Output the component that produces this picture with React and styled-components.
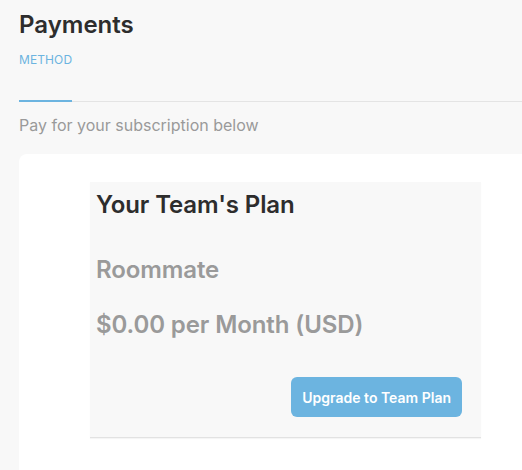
import React from "react";
import styled, { createGlobalStyle } from "styled-components";

const Global = createGlobalStyle`
  html, body { margin: 0; padding: 0; overflow: hidden; background: #f8f8f8; }
  body { font-family: Inter, "Noto Sans", sans-serif; -webkit-font-smoothing: antialiased; }
  * { box-sizing: border-box; }
`;

const Page = styled.div`
  min-height: 470px;
  padding: 10px 0 0 19px;
  background: #f8f8f8;
`;

const Title = styled.h1`
  margin: 0;
  font-size: 24px;
  line-height: 29px;
  font-weight: 600;
  color: #2d2d2d;
`;

const Tabs = styled.div`
  display: flex;
  margin-top: 13px;
  border-bottom: 1px solid #e4e4e4;
`;

const Tab = styled.div`
  font-size: 12px;
  line-height: 15px;
  font-weight: 400;
  letter-spacing: 0.1px;
  color: ${(p) => (p.$active ? "#6cb4e0" : "#999")};
  padding-bottom: 33px;
  border-bottom: 2px solid ${(p) => (p.$active ? "#6cb4e0" : "transparent")};
  margin-bottom: -1px;
  width: 53px;
`;

const Subtitle = styled.p`
  margin: 14px 0 0;
  font-size: 16px;
  line-height: 19px;
  color: #9a9a9a;
`;

const Card = styled.div`
  margin-top: 19px;
  background: #fff;
  border-radius: 8px 0 0 0;
  padding: 28px 0 40px 71px;
`;

const PlanBox = styled.div`
  width: 391px;
  background: #f8f8f8;
  padding: 8px 19px 20px 6px;
  border-bottom: 1px solid #e2e2e2;
  box-shadow: 0 1px 1px rgba(0, 0, 0, 0.04);
  display: flex;
  flex-direction: column;
`;

const PlanHeading = styled.h3`
  margin: 0;
  font-size: 24px;
  line-height: 29px;
  font-weight: 600;
  letter-spacing: -0.1px;
  color: ${(p) => (p.$muted ? "#9a9a9a" : "#2d2d2d")};
  margin-top: ${(p) => p.$gap || 0}px;
`;

const Actions = styled.div`
  display: flex;
  justify-content: flex-end;
  margin-top: 38px;
`;

const Button = styled.button`
  height: 40px;
  padding: 0 11px;
  border: none;
  border-radius: 6px;
  background: #6cb4e0;
  color: #fff;
  font-family: Inter, "Noto Sans", sans-serif;
  font-size: 14px;
  font-weight: 600;
  cursor: pointer;
`;

export default function App() {
  return (
    <>
      <Global />
      <Page>
        <Title>Payments</Title>
        <Tabs>
          <Tab $active>METHOD</Tab>
        </Tabs>
        <Subtitle>Pay for your subscription below</Subtitle>
        <Card>
          <PlanBox>
            <PlanHeading>Your Team's Plan</PlanHeading>
            <PlanHeading $muted $gap={36}>Roommate</PlanHeading>
            <PlanHeading $muted $gap={26}>$0.00 per Month (USD)</PlanHeading>
            <Actions>
              <Button>Upgrade to Team Plan</Button>
            </Actions>
          </PlanBox>
        </Card>
      </Page>
    </>
  );
}
